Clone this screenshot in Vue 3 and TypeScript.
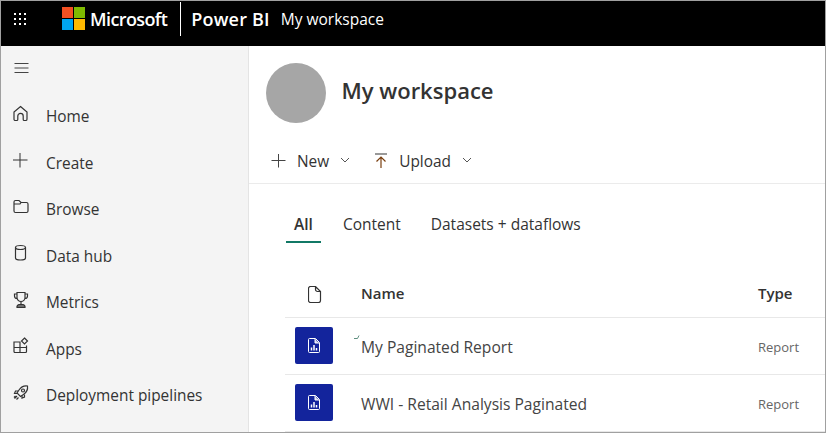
<script setup lang="ts">
interface NavItem {
  label: string;
  icon: string;
}

const navItems: NavItem[] = [
  { label: 'Home', icon: 'home' },
  { label: 'Create', icon: 'create' },
  { label: 'Browse', icon: 'browse' },
  { label: 'Data hub', icon: 'hub' },
  { label: 'Metrics', icon: 'metrics' },
  { label: 'Apps', icon: 'apps' },
  { label: 'Deployment pipelines', icon: 'deploy' },
];

const tabs = ['All', 'Content', 'Datasets + dataflows'];

const reports = [
  { name: 'My Paginated Report', type: 'Report', fresh: true },
  { name: 'WWI - Retail Analysis Paginated', type: 'Report', fresh: false },
];
</script>

<template>
  <div class="frame">
    <header class="topbar">
      <svg class="waffle" width="16" height="16" viewBox="0 0 16 16" fill="#fff">
        <template v-for="y in [2, 7, 12]" :key="y">
          <rect v-for="x in [2, 7, 12]" :key="x" :x="x" :y="y" width="2" height="2" />
        </template>
      </svg>
      <svg class="ms-logo" width="23" height="23" viewBox="0 0 23 23">
        <rect width="11" height="11" fill="#f25022" />
        <rect x="12" width="11" height="11" fill="#7fba00" />
        <rect y="12" width="11" height="11" fill="#00a4ef" />
        <rect x="12" y="12" width="11" height="11" fill="#ffb900" />
      </svg>
      <span class="ms-name">Microsoft</span>
      <span class="sep"></span>
      <span class="product">Power BI</span>
      <span class="crumb">My workspace</span>
    </header>

    <div class="body">
      <nav class="sidebar">
        <svg class="burger" width="16" height="16" viewBox="0 0 16 16" stroke="#444" fill="none">
          <path d="M0.5 3.5h14M0.5 8h14M0.5 12.5h14" />
        </svg>
        <a v-for="item in navItems" :key="item.label" class="nav-item">
          <svg class="nav-icon" width="16" height="18" viewBox="0 0 16 18" fill="none" stroke="#333" stroke-width="1.2">
            <template v-if="item.icon === 'home'">
              <path d="M7.500 1.500 14 7v7.200a1.300 1.300 0 0 1-1.300 1.300h-1.500a1 1 0 0 1-1-1V11a2.700 2.700 0 0 0-5.400 0v3.500a1 1 0 0 1-1 1H2.300A1.300 1.300 0 0 1 1 14.200V7Z" />
            </template>
            <template v-else-if="item.icon === 'create'">
              <path d="M7 2v14.500M0 9h14.500" stroke-width="1" />
            </template>
            <template v-else-if="item.icon === 'browse'">
              <path d="M1 6V4a1.500 1.500 0 0 1 1.500-1.500H6l2 2h5.500A1.500 1.500 0 0 1 15 6v7a1.500 1.500 0 0 1-1.500 1.500h-11A1.500 1.500 0 0 1 1 13V6h6l1-1.500" />
            </template>
            <template v-else-if="item.icon === 'hub'">
              <ellipse cx="7.500" cy="3.500" rx="5" ry="2" />
              <path d="M2.500 3.500v10.500c0 1.100 2.200 2 5 2s5-.9 5-2V3.500" />
            </template>
            <template v-else-if="item.icon === 'metrics'">
              <path d="M4 1.500h8v5a4 4 0 0 1-8 0ZM4 3H1.500v2A2.500 2.500 0 0 0 4 7.500M12 3h2.500v2A2.500 2.500 0 0 1 12 7.500M8 10.500v3" />
              <path d="M4 16.500a2.500 2.500 0 0 1 2-3h4a2.500 2.500 0 0 1 2 3Z" fill="#6e6e6e" />
            </template>
            <template v-else-if="item.icon === 'apps'">
              <path d="M1 5h6v10.500H2a1 1 0 0 1-1-1ZM1 10.500h12.500V14.500a1 1 0 0 1-1 1H7" />
              <path d="M13.500 8.500v2" />
              <path d="m11.500 1 3 3-3 3-3-3Z" />
            </template>
            <template v-else>
              <path d="M14.500 2c-3.500-.5-6.500 1-8.500 4l-2 3 3.500 3.500 3-2c3-2 4.500-5 4-8.500Z" />
              <circle cx="10" cy="6.500" r="1.500" />
              <path d="M5 7H2.500L1.500 9.500 4 9.500M9 11.500v2.500l2.500-1V10.500M4 12l-2.500 2.500M5.500 13.500l-2 2M2.500 12l-1.500 1.500" />
            </template>
          </svg>
          <span>{{ item.label }}</span>
        </a>
      </nav>

      <main class="content">
        <section class="ws-head">
          <div class="avatar"></div>
          <h1>My workspace</h1>
        </section>

        <div class="commands">
          <button class="cmd">
            <svg width="16" height="16" viewBox="0 0 16 16" stroke="#444" fill="none">
              <path d="M7.500 1v13.500M.5 7.500h14" />
            </svg>
            <span>New</span>
            <svg class="chev" width="12" height="12" viewBox="0 0 12 12" stroke="#555" fill="none">
              <path d="m2 4 4 4 4-4" />
            </svg>
          </button>
          <button class="cmd">
            <svg width="16" height="16" viewBox="0 0 16 16" fill="none">
              <path d="M2 1h12" stroke="#777" stroke-width="1.500" />
              <path d="M8 15V4M3.500 8.500 8 4l4.500 4.500" stroke="#7a3f10" stroke-width="1.200" />
            </svg>
            <span>Upload</span>
            <svg class="chev" width="12" height="12" viewBox="0 0 12 12" stroke="#555" fill="none">
              <path d="m2 4 4 4 4-4" />
            </svg>
          </button>
        </div>

        <div class="tabs">
          <span v-for="(tab, i) in tabs" :key="tab" class="tab" :class="{ active: i === 0 }">{{ tab }}</span>
        </div>

        <div class="table">
          <div class="row head">
            <span class="col-icon">
              <svg width="14" height="17" viewBox="0 0 14 17" fill="none" stroke="#333" stroke-width="1.200">
                <path d="M2.500.5h5l5 5v9a2 2 0 0 1-2 2h-8a2 2 0 0 1-2-2v-12a2 2 0 0 1 2-2ZM7.500.5v3a2 2 0 0 0 2 2h3" />
              </svg>
            </span>
            <span class="col-name">Name</span>
            <span class="col-type">Type</span>
          </div>
          <div v-for="report in reports" :key="report.name" class="row item">
            <span class="col-icon">
              <span class="tile">
                <svg width="12" height="15" viewBox="0 0 12 15" fill="none" stroke="#fff">
                  <path d="M1.500.5h6l4 4v9a1 1 0 0 1-1 1h-9a1 1 0 0 1-1-1v-12a1 1 0 0 1 1-1Z" />
                  <path d="M7 1v4h4" fill="#c9cdea" />
                  <path d="M3.500 9.500v3M6 7v5.500M8.500 10v2.500" stroke-width="1.500" />
                </svg>
              </span>
            </span>
            <span class="col-name">
              {{ report.name }}
              <svg v-if="report.fresh" class="spark" width="6" height="5" viewBox="0 0 6 5" fill="none" stroke="#5f8f80">
                <path d="M0 3.500h3.500l1.500-3" />
              </svg>
            </span>
            <span class="col-type">{{ report.type }}</span>
          </div>
        </div>
      </main>
    </div>
  </div>
</template>

<style scoped>
.frame {
  box-sizing: border-box;
  width: 826px;
  height: 433px;
  border: 1px solid #a0a0a0;
  display: flex;
  flex-direction: column;
  overflow: hidden;
  background: #fff;
  font-family: "Open Sans", "Noto Sans", sans-serif;
  color: #333;
}

.topbar {
  flex: none;
  box-sizing: border-box;
  height: 45px;
  padding-bottom: 10px;
  background: #000;
  color: #fff;
  display: flex;
  align-items: center;
}

.waffle {
  margin-left: 11px;
}

.ms-logo {
  margin-left: 34px;
}

.ms-name {
  margin-left: 5px;
  font-size: 18px;
  font-weight: 600;
  letter-spacing: -0.6px;
}

.sep {
  width: 1px;
  height: 34px;
  margin-left: 13px;
  background: #fff;
}

.product {
  margin-left: 10px;
  font-size: 18px;
  font-weight: 600;
  letter-spacing: 0.2px;
}

.crumb {
  margin-left: 11px;
  font-size: 15.500px;
}

.body {
  flex: 1;
  display: flex;
  min-height: 0;
}

.sidebar {
  flex: none;
  box-sizing: border-box;
  width: 248px;
  background: #f4f4f4;
  border-right: 1px solid #e4e4e4;
  padding: 14px 0 0 12px;
  display: flex;
  flex-direction: column;
}

.burger {
  margin: 0 0 17.500px 1px;
}

.nav-item {
  display: flex;
  align-items: center;
  height: 46.500px;
  font-size: 15.400px;
  color: #333;
}

.nav-icon {
  flex: none;
  margin-right: 17px;
  position: relative;
  top: -3px;
}

.content {
  flex: 1;
  min-width: 0;
}

.ws-head {
  display: flex;
  align-items: center;
  gap: 15.500px;
  padding: 17px 0 0 17px;
}

.avatar {
  width: 60px;
  height: 60px;
  border-radius: 50%;
  background: #a6a6a6;
}

h1 {
  margin: 0 0 7px;
  font-size: 22px;
  font-weight: 600;
  color: #333;
}

.commands {
  display: flex;
  gap: 22px;
  height: 61px;
  box-sizing: border-box;
  padding: 27px 0 0 22px;
  border-bottom: 1px solid #ebebeb;
}

.cmd {
  display: flex;
  align-items: flex-start;
  gap: 10px;
  height: 24px;
  padding: 0;
  border: 0;
  background: none;
  font: inherit;
  font-size: 15.400px;
  line-height: 24px;
  color: #333;
}

.cmd svg {
  margin-top: 3px;
}

.cmd .chev {
  margin-top: 4px;
}

.tabs {
  display: flex;
  padding: 28px 0 0 37px;
}

.tab {
  padding: 0 0 5px;
  font-size: 15.500px;
  line-height: 24px;
  color: #333;
}

.tab:nth-child(2) {
  margin-left: 22px;
}

.tab:nth-child(3) {
  margin-left: 30px;
}

.active {
  padding: 0 8px 5px;
  font-weight: 600;
  border-bottom: 2px solid #117865;
}

.table {
  margin: 28px 0 0 36px;
}

.row {
  display: flex;
  align-items: center;
  border-bottom: 1px solid #e8e8e8;
}

.head {
  height: 46px;
  font-weight: 600;
  font-size: 15px;
  color: #333;
}

.item {
  height: 57px;
  box-sizing: border-box;
  font-size: 15.600px;
  color: #444;
}

.col-icon {
  flex: none;
  width: 76px;
  display: flex;
  box-sizing: border-box;
  padding-left: 10px;
}

.head .col-icon {
  padding-left: 23px;
}

.head .col-name,
.head .col-type {
  padding-bottom: 2px;
}

.item .col-name,
.item .col-type {
  padding-top: 2px;
}

.col-name {
  flex: none;
  width: 397px;
  position: relative;
}

.col-type {
  flex: none;
}

.item .col-type {
  font-size: 13px;
  color: #666;
}

.tile {
  width: 38px;
  height: 37px;
  margin-bottom: 1px;
  border-radius: 2px;
  background: #13249c;
  display: flex;
  align-items: center;
  justify-content: center;
}

.spark {
  position: absolute;
  left: -7px;
  top: 1px;
}
</style>

<style>
html,
body {
  margin: 0;
}
</style>
